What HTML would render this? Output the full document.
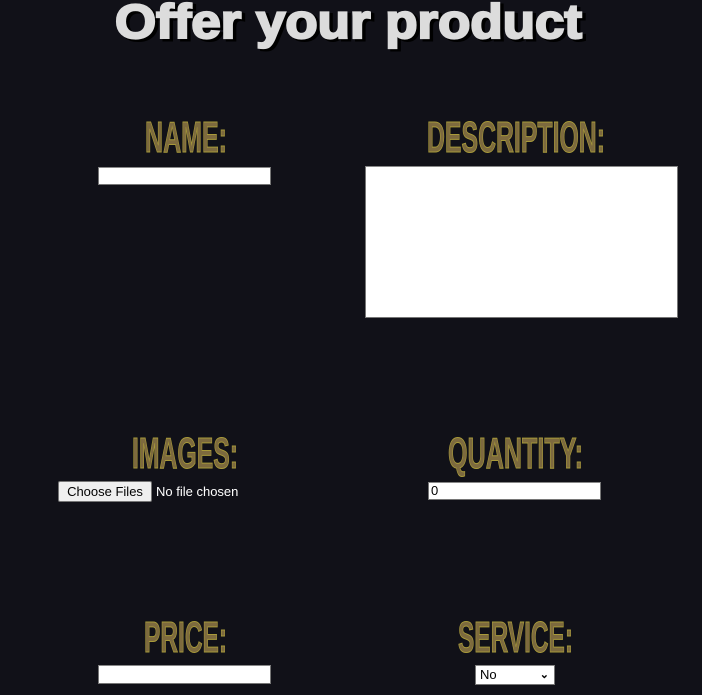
<!DOCTYPE html>
<html><head><style>
html,body{margin:0;padding:0;background:#111118;width:702px;height:695px;overflow:hidden;position:relative;font-family:"Liberation Sans",sans-serif;}
.a{position:absolute;box-sizing:border-box;}
.inp{background:#fff;border:1px solid #767676;border-top-color:#888;}
svg{position:absolute;left:0;top:0;}
</style></head><body>
<svg width="702" height="695">
<g font-family="Liberation Sans" font-weight="bold">
<text x="118" y="40" font-size="48" textLength="467" lengthAdjust="spacingAndGlyphs" fill="#000" stroke="#000" stroke-width="3">Offer your product</text>
<text x="115" y="38" font-size="48" textLength="467" lengthAdjust="spacingAndGlyphs" fill="#dcdcdc" stroke="#dcdcdc" stroke-width="2.2">Offer your product</text>
<g font-size="44" fill="#7d6a3e" stroke="#a89a3a" stroke-width="1">
<text x="145" y="152" textLength="82" lengthAdjust="spacingAndGlyphs">NAME:</text>
<text x="427" y="152" textLength="178" lengthAdjust="spacingAndGlyphs">DESCRIPTION:</text>
<text x="132" y="468" textLength="106" lengthAdjust="spacingAndGlyphs">IMAGES:</text>
<text x="448" y="468" textLength="135" lengthAdjust="spacingAndGlyphs">QUANTITY:</text>
<text x="144" y="652" textLength="83" lengthAdjust="spacingAndGlyphs">PRICE:</text>
<text x="458" y="652" textLength="115" lengthAdjust="spacingAndGlyphs">SERVICE:</text>
</g></g>
</svg>
<div class="a inp" style="left:98px;top:167px;width:173px;height:18px"></div>
<div class="a inp" style="left:365px;top:166px;width:313px;height:152px"></div>
<div class="a" style="left:58px;top:481px;width:94px;height:21px;background:#efefef;border:1px solid #767676;border-radius:2px;font-size:13px;line-height:19px;text-align:center;color:#000">Choose Files</div>
<div class="a" style="left:156px;top:483px;font-size:13px;color:#fff;line-height:17px">No file chosen</div>
<div class="a inp" style="left:428px;top:482px;width:173px;height:18px;font-size:13px;line-height:16px;padding-left:2px;color:#000">0</div>
<div class="a inp" style="left:98px;top:665px;width:173px;height:19px"></div>
<div class="a inp" style="left:475px;top:665px;width:80px;height:20px;font-size:13px;line-height:18px;padding-left:4px;color:#000">No<span style="position:absolute;right:5px;top:0;font-size:11px;font-weight:bold">&#8964;</span></div>
</body></html>
